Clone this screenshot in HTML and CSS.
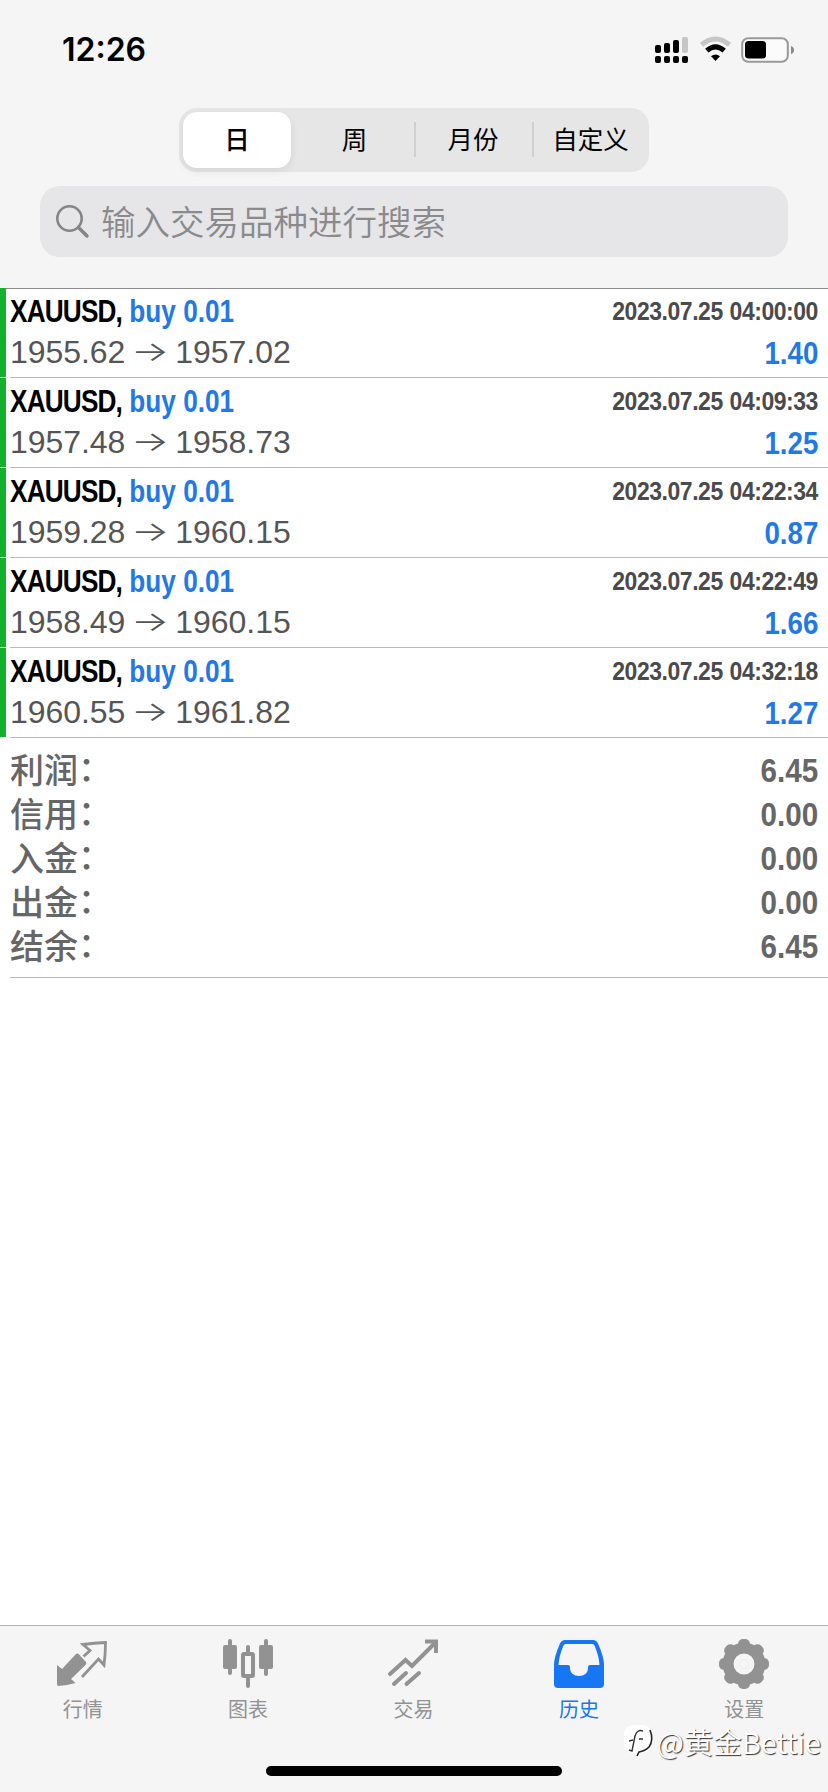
FILE: index.html
```html
<!DOCTYPE html>
<html lang="zh-CN">
<head>
<meta charset="utf-8">
<title>历史</title>
<link rel="stylesheet" href="styles.css">
</head>
<body>
<div class="screen">
  <header class="header">
    <div class="status">
      <span class="time">12:26</span>
      <svg class="status-icons" width="142" height="30" viewBox="0 0 142 30">
        <g fill="#000">
          <rect x="1" y="10" width="6" height="8" rx="2"/><rect x="10" y="8" width="6" height="10" rx="2"/><rect x="19" y="5" width="6" height="13" rx="2"/>
          <rect x="1" y="21" width="6" height="7" rx="2"/><rect x="10" y="21" width="6" height="7" rx="2"/><rect x="19" y="21" width="6" height="7" rx="2"/><rect x="28" y="21" width="6" height="7" rx="2"/>
        </g>
        <rect x="28" y="2" width="6" height="16" rx="2" fill="#c6c6c6"/>
        <path d="M47.5 9.8Q61.5 -1.8 75.500 9.800" fill="none" stroke="#c6c6c6" stroke-width="5"/>
        <path d="M52.800 15.600Q61.500 8 70.200 15.600" fill="none" stroke="#000" stroke-width="5"/>
        <path d="M57 21.200Q61.500 17.600 66 21.200L61.500 26Z" fill="#000"/>
        <rect x="88.200" y="3.200" width="45.600" height="23.600" rx="6" fill="#fbfbfb" stroke="#999" stroke-width="2"/>
        <rect x="91" y="6" width="21" height="17.500" rx="3.500" fill="#000"/>
        <path d="M137 11Q140 12 140 15T137 19Z" fill="#888"/>
      </svg>
    </div>
    <nav class="segments">
      <span class="segment selected">日</span>
      <span class="segment second">周</span>
      <span class="segment ruled">月份</span>
      <span class="segment ruled">自定义</span>
    </nav>
    <div class="search">
      <svg width="34" height="34" viewBox="0 0 34 34" fill="none" stroke="#858587" stroke-linecap="round"><circle cx="13.500" cy="13.500" r="12.200" stroke-width="2.600"/><path d="M22.500 22.500L31 31" stroke-width="3.500"/></svg>
      <span class="placeholder">输入交易品种进行搜索</span>
    </div>
  </header>

  <main class="history">
    <div class="deal"><div class="deal-body">
      <div class="line"><span class="title"><span class="symbol">XAUUSD,</span> <span class="side">buy 0.01</span></span><span class="date">2023.07.25 04:00:00</span></div>
      <div class="line"><span class="prices">1955.62<span class="arrow">→</span>1957.02</span><span class="profit">1.40</span></div>
    </div></div>
    <div class="deal"><div class="deal-body">
      <div class="line"><span class="title"><span class="symbol">XAUUSD,</span> <span class="side">buy 0.01</span></span><span class="date">2023.07.25 04:09:33</span></div>
      <div class="line"><span class="prices">1957.48<span class="arrow">→</span>1958.73</span><span class="profit">1.25</span></div>
    </div></div>
    <div class="deal"><div class="deal-body">
      <div class="line"><span class="title"><span class="symbol">XAUUSD,</span> <span class="side">buy 0.01</span></span><span class="date">2023.07.25 04:22:34</span></div>
      <div class="line"><span class="prices">1959.28<span class="arrow">→</span>1960.15</span><span class="profit">0.87</span></div>
    </div></div>
    <div class="deal"><div class="deal-body">
      <div class="line"><span class="title"><span class="symbol">XAUUSD,</span> <span class="side">buy 0.01</span></span><span class="date">2023.07.25 04:22:49</span></div>
      <div class="line"><span class="prices">1958.49<span class="arrow">→</span>1960.15</span><span class="profit">1.66</span></div>
    </div></div>
    <div class="deal"><div class="deal-body">
      <div class="line"><span class="title"><span class="symbol">XAUUSD,</span> <span class="side">buy 0.01</span></span><span class="date">2023.07.25 04:32:18</span></div>
      <div class="line"><span class="prices">1960.55<span class="arrow">→</span>1961.82</span><span class="profit">1.27</span></div>
    </div></div>
    <div class="summary">
      <div class="total"><span class="label">利润<span class="colon">：</span></span><span class="amount">6.45</span></div>
      <div class="total"><span class="label">信用<span class="colon">：</span></span><span class="amount">0.00</span></div>
      <div class="total"><span class="label">入金<span class="colon">：</span></span><span class="amount">0.00</span></div>
      <div class="total"><span class="label">出金<span class="colon">：</span></span><span class="amount">0.00</span></div>
      <div class="total"><span class="label">结余<span class="colon">：</span></span><span class="amount">6.45</span></div>
    </div>
  </main>

  <footer class="footer">
    <nav class="tabs">
      <div class="tab">
        <svg width="52" height="52" viewBox="0 0 52 52"><path d="M0 27L5 31L19 16Q20.500 15 22 16.500L29 24Q30 25.500 28.500 27L14 41L18.500 45Q10 47.500 1.500 48Q0 48 0 46Z" fill="#929292"/><path d="M26.500 18.500L33 12.500L26 6.500Q37 5 48.500 4.500Q48.500 16 47 27L41.500 21L25 39" fill="none" stroke="#929292" stroke-width="2.800"/></svg>
        <span>行情</span>
      </div>
      <div class="tab">
        <svg width="52" height="52" viewBox="0 0 52 52"><g fill="#929292"><rect x="1" y="7" width="14" height="24" rx="2"/><rect x="6" y="1" width="4" height="36" rx="2"/><rect x="37" y="7" width="14" height="24" rx="2"/><rect x="42" y="1" width="4" height="37" rx="2"/><rect x="24" y="7" width="4" height="10" rx="2"/><rect x="24" y="37" width="4" height="13" rx="2"/></g><rect x="21" y="16" width="10" height="22" rx="1" fill="#f5f5f5" stroke="#929292" stroke-width="4"/></svg>
        <span>图表</span>
      </div>
      <div class="tab">
        <svg width="52" height="52" viewBox="0 0 52 52" fill="none" stroke="#929292" stroke-width="4"><path d="M3 36L18.500 22L25 28L48 5" stroke-linecap="round"/><path d="M38 3.500H49V15" stroke-linecap="butt"/><path d="M7 46L19 35M19.500 46L32 35" stroke-linecap="round"/></svg>
        <span>交易</span>
      </div>
      <div class="tab active">
        <svg width="52" height="52" viewBox="0 0 52 52"><path fill-rule="evenodd" d="M12 2H40Q43.500 2 45 5.500Q51 19 51 27V46Q51 50 47 50H5Q1 50 1 46V27Q1 19 7 5.500Q8.500 2 12 2ZM12.500 6Q11 6 10.500 7.500Q6 18 5.500 27H15Q17 27 17 29V31Q18 38 26 38T35 31V29Q35 27 37 27H46.500Q46 18 41.500 7.500Q41 6 39.500 6Z" fill="#1676f3"/></svg>
        <span>历史</span>
      </div>
      <div class="tab">
        <svg width="52" height="52" viewBox="0 0 52 52"><g fill="#929292"><circle cx="26" cy="26" r="21.500"/><g id="t"><rect x="20" y="1" width="12" height="50" rx="5"/><rect x="1" y="20" width="50" height="12" rx="5"/></g><use href="#t" transform="rotate(45 26 26)"/></g><circle cx="26" cy="26" r="10.500" fill="#f5f5f5"/><circle cx="26" cy="26" r="4.500" fill="none" stroke="#ececec"/></svg>
        <span>设置</span>
      </div>
    </nav>
    <div class="home-bar"></div>
    <div class="watermark">
      <svg width="32" height="34" viewBox="0 0 32 34"><rect x="1" y="1" width="28" height="28" rx="9" fill="#fff"/><path d="M27 6Q31 16 26 23Q22 27 16 28L14 32" fill="none" stroke="#222" stroke-width="1.600"/><path d="M20 7Q14 5 12 12L9 27L6 26M6 17L10 16M16 15H20" fill="none" stroke="#333" stroke-width="1.400"/></svg>
      <span>@黄金Bettie</span>
    </div>
  </footer>
</div>
</body>
</html>
```

FILE: styles.css
```css
* { box-sizing: border-box; }
body { margin: 0; background: #fff; font-family: "Liberation Sans", "Noto Sans CJK SC", sans-serif; }
.screen { width: 828px; height: 1792px; display: flex; flex-direction: column; }

.header { height: 289px; background: #f5f5f5; border-bottom: 1px solid #8c8c8c; flex: none; }
.status { height: 108px; padding: 30px 32px 0 62px; display: flex; justify-content: space-between; align-items: flex-start; }
.time { font: 600 32px/40px Inter, sans-serif; letter-spacing: 0; }
.status-icons { margin-top: 5px; }
.segments { width: 470px; height: 64px; margin-left: 179px; padding: 4px 0 4px 4px; border-radius: 18px; background: #e6e6e6; display: grid; grid-template-columns: 108px 123px 118px 117px; }
.segment { display: flex; align-items: center; justify-content: center; font: 400 25.500px/36px "Noto Sans CJK SC", sans-serif; padding-bottom: 4px; }
.segment.second { padding-left: 4px; }
.segment.selected { background: #fff; border-radius: 14px; font-weight: 500; box-shadow: 0 3px 8px rgba(0,0,0,.08); }
.segment.ruled { background: linear-gradient(#d0d0d0, #d0d0d0) 0 10px / 2px 35px no-repeat; }
.search { margin: 14px 40px 0; height: 71px; border-radius: 20px; background: #e6e6e8; display: flex; align-items: center; gap: 11px; padding-left: 16px; }
.placeholder { font: 350 34.500px/50px "Noto Sans CJK SC", sans-serif; color: #8a8a8c; padding-bottom: 3px; }

.history { flex: 1; }
.deal { height: 90px; padding-left: 10px; background: linear-gradient(#14b12f, #14b12f) 0 0 / 6px 89px no-repeat; }
.deal:first-child { margin-top: -1px; }
.deal-body { height: 90px; padding: 3px 10px 0 0; border-bottom: 1px solid #b9b9b9; }
.deal:first-child .deal-body { border-top: 1px solid #8c8c8c; padding-top: 2px; }
.line { height: 41px; display: flex; justify-content: space-between; align-items: center; white-space: nowrap; }
.title, .date, .profit, .amount { font-weight: 700; }
.title { font-size: 32px; transform: scaleX(.818); transform-origin: left; }
.symbol { letter-spacing: -1px; }
.side, .profit { color: #2379e3; }
.date { font-size: 26px; color: #4a4a4c; letter-spacing: -0.500px; word-spacing: 1px; transform: scaleX(.883); transform-origin: right; }
.prices { font-size: 32px; color: #555; display: flex; letter-spacing: -0.050px; }
.arrow { font-family: Inter, sans-serif; width: 50px; text-align: center; font-weight: 300; line-height: 34px; transform: scale(1.25, .85); }
.profit { font-size: 32px; padding-top: 2px; transform: scaleX(.865); transform-origin: right; }

.summary { height: 240px; margin-left: 10px; padding: 10px 10px 0 0; border-bottom: 1px solid #b9b9b9; color: #666; }
.total { height: 44px; display: flex; justify-content: space-between; align-items: center; font: 500 34px/44px "Noto Sans CJK SC", sans-serif; }
.label { padding-bottom: 2px; }
.colon { line-height: 1; vertical-align: 2px; }
.amount { font-family: "Liberation Sans", sans-serif; font-size: 34px; font-weight: 700; transform: scaleX(.87); transform-origin: right; }

.footer { position: relative; height: 167px; border-top: 1px solid #b2b2b2; background: #f5f5f5; flex: none; }
.tabs { display: grid; grid-template-columns: repeat(5, 1fr); height: 140px; padding-right: 1px; }
.tab { display: flex; flex-direction: column; align-items: center; padding-top: 12px; color: #929292; font: 400 20px/30px "Noto Sans CJK SC", sans-serif; }
.tab span { margin-top: 4px; }
.tab.active { color: #1676f3; }
.home-bar { width: 296px; height: 10px; border-radius: 5px; background: #000; margin: 0 auto; }
.watermark { position: absolute; right: 7px; top: 95px; display: flex; align-items: center; gap: 2px; color: #fff; font: 350 29px/40px "Noto Sans CJK SC", sans-serif; text-shadow: 1px 1px 1px #333; }
```
